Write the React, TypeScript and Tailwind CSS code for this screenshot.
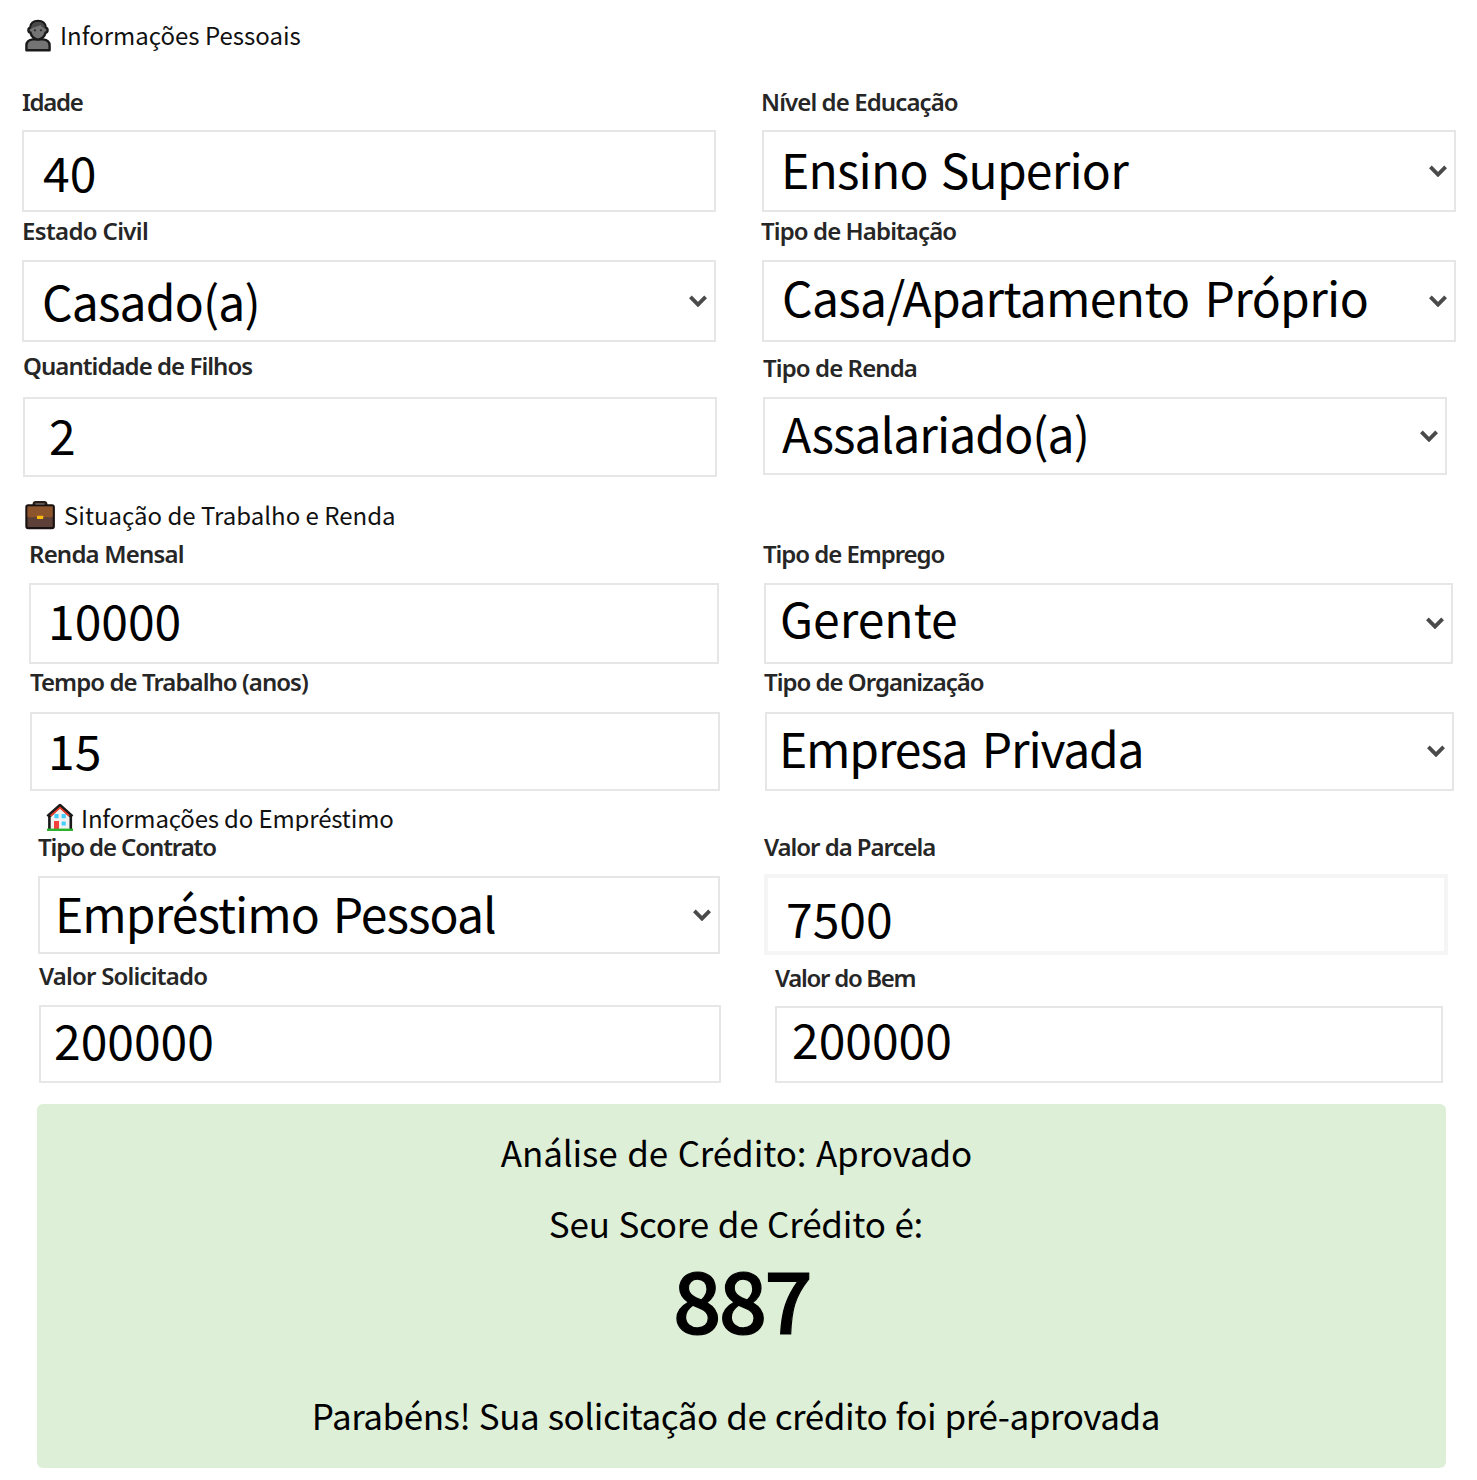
import React from 'react';
import clsx from 'clsx';

type FieldProps = {
  label: string;
  value: string;
  /** offset and tracking of the label */
  labelClass: string;
  /** margins, size and padding of the control */
  boxClass: string;
  /** offset and tracking of the value */
  valueClass?: string;
  borderClass?: string;
  select?: boolean;
};

function Chevron() {
  return (
    <svg className="mb-px h-3 w-[18px] shrink-0" viewBox="0 0 18 12" fill="none" aria-hidden="true">
      <path d="M1.4 1.8 L9 9.6 L16.6 1.8" stroke="#4a4a4a" strokeWidth="3.8" />
    </svg>
  );
}

function Field({ label, value, labelClass, boxClass, valueClass, borderClass = 'border-2 border-[#e6e6e6]', select }: FieldProps) {
  return (
    <div className="flex flex-col items-start">
      <span className={clsx("font-['Noto_Sans'] text-2xl leading-7 font-semibold whitespace-nowrap text-[#262626]", labelClass)}>{label}</span>
      <div className={clsx('flex items-start justify-between bg-white pr-[7px]', borderClass, boxClass)}>
        <span className={clsx('text-5xl leading-[48px] whitespace-nowrap text-black', valueClass)}>{value}</span>
        {select && (
          <span className="flex h-full items-center">
            <Chevron />
          </span>
        )}
      </div>
    </div>
  );
}

function Row({ className, children }: { className: string; children: React.ReactNode }) {
  return <div className={clsx('grid grid-cols-[740px_737px] items-start', className)}>{children}</div>;
}

function PersonIcon() {
  return (
    <svg className="mt-[-2px] h-[34px] w-7 shrink-0" viewBox="0 0 28 34" aria-hidden="true">
      <path d="M2.4 32.3 V27.5 C2.4 23.6 4.8 21.8 9 21.4 H19 C23.2 21.8 25.6 23.6 25.6 27.5 V32.3 Z" fill="#747474" stroke="#1a1a1a" strokeWidth="2.4" strokeLinejoin="round" />
      <path d="M14 3 C9.2 3 6.6 6 6.2 9.6 C3.8 10 3.8 14.2 6.4 14.6 C7.3 18.2 10.3 21.6 14 21.6 C17.7 21.6 20.7 18.2 21.6 14.6 C24.2 14.2 24.2 10 21.8 9.6 C21.4 6 18.8 3 14 3 Z" fill="#747474" stroke="#1a1a1a" strokeWidth="2.4" />
      <path d="M7.2 10.5 C7.2 6 10 4 14 4 C18.2 4 20.8 6 20.8 10.5 C18.8 9.5 17.3 8.4 16.5 7 C14 9 10.5 8.6 7.2 10.5 Z" fill="#484848" />
      <circle cx="11" cy="12.3" r="1.1" fill="#2c2c2c" />
      <circle cx="17" cy="12.3" r="1.1" fill="#2c2c2c" />
    </svg>
  );
}

function BriefcaseIcon() {
  return (
    <svg className="h-[30px] w-[31px] shrink-0" viewBox="0 0 31 30" aria-hidden="true">
      <path d="M10 6 V3.8 C10 2.8 10.7 2.3 11.7 2.3 H20.3 C21.3 2.3 22 2.8 22 3.8 V6" fill="none" stroke="#2a1d1a" strokeWidth="2.8" />
      <rect x="2.4" y="5.3" width="27.4" height="22.8" rx="1.8" fill="#5d4037" stroke="#1a1210" strokeWidth="2.2" />
      <path d="M3.5 6.4 H28.7 V16 C28.7 16.8 28 17.2 27 17.2 H5.2 C4.2 17.2 3.5 16.8 3.5 16 Z" fill="#8d552b" />
      <rect x="13" y="15.7" width="6.2" height="3.2" rx="0.5" fill="#fdbb0e" />
    </svg>
  );
}

function HouseIcon() {
  return (
    <svg className="h-7 w-[29px] shrink-0" viewBox="0 0 29 28" aria-hidden="true">
      <path d="M4.4 28 V13.5 L14.8 3.5 L25.8 13.5 V28" fill="#f1f1f1" stroke="#1a1a1a" strokeWidth="2.6" />
      <path d="M2.6 13.6 L15 2.6 L27.2 13.6" fill="none" stroke="#1a1a1a" strokeWidth="3.4" strokeLinejoin="round" />
      <path d="M5.6 12.9 L15 4.6 L24.2 12.9" fill="none" stroke="#ef3f2a" strokeWidth="1.7" />
      <rect x="9.4" y="11" width="4.2" height="4.2" rx="0.6" fill="#45cdfb" />
      <rect x="16.6" y="11" width="4.2" height="4.2" rx="0.6" fill="#45cdfb" />
      <rect x="16.6" y="18.4" width="4.2" height="4.2" rx="0.6" fill="#45cdfb" />
      <rect x="9" y="18" width="5" height="8" fill="#f0413a" />
      <path d="M2 25.6 H28 V28 H2 Z" fill="#2bb32b" />
    </svg>
  );
}

export default function App() {
  return (
    <main className="h-[1480px] w-[1477px] overflow-hidden bg-white pt-5 font-['Noto_Sans_CJK_JP',sans-serif]">
      <h2 className="flex h-7 items-start pl-6 text-2xl leading-7 text-[#111]">
        <PersonIcon />
        <span className="mt-px ml-2">Informações Pessoais</span>
      </h2>

      <Row className="mt-10 h-[129px]">
        <Field label="Idade" value="40" labelClass="ml-[22px] tracking-[-1.3px]" boxClass="ml-[22px] mt-[14px] h-[82px] w-[694px] pl-[19px] pt-[15px]" />
        <Field select label="Nível de Educação" value="Ensino Superior" labelClass="ml-[21px] tracking-[-0.9px]" boxClass="ml-[22px] mt-[14px] h-[82px] w-[694px] pl-[17px]" valueClass="mt-[12px] tracking-[-0.8px] [word-spacing:3px]" />
      </Row>
      <Row className="h-[135px]">
        <Field select label="Estado Civil" value="Casado(a)" labelClass="ml-[22px] tracking-[-0.65px]" boxClass="ml-[22px] mt-[15px] h-[82px] w-[694px] pl-[18px]" valueClass="mt-[14px] tracking-[-0.85px]" />
        <Field select label="Tipo de Habitação" value="Casa/Apartamento Próprio" labelClass="ml-[21px] tracking-[-0.9px]" boxClass="ml-[22px] mt-[15px] h-[82px] w-[694px] pl-[18px]" valueClass="mt-[10px] tracking-[-0.68px] [word-spacing:5px]" />
      </Row>
      <Row className="h-[148px]">
        <Field label="Quantidade de Filhos" value="2" labelClass="ml-[23px] tracking-[-0.95px]" boxClass="ml-[23px] mt-[17px] h-[80px] w-[694px] pl-[24px] pt-[11px]" />
        <Field select label="Tipo de Renda" value="Assalariado(a)" labelClass="mt-[2px] ml-[23px] tracking-[-0.9px]" boxClass="ml-[23px] mt-[15px] h-[78px] w-[684px] pl-[17px]" valueClass="mt-[9px] tracking-[-0.95px]" />
      </Row>

      <h2 className="flex h-7 items-start pl-6 text-2xl leading-7 text-[#111]">
        <BriefcaseIcon />
        <span className="mt-px ml-[9px]">Situação de Trabalho e Renda</span>
      </h2>

      <Row className="mt-3 h-32">
        <Field label="Renda Mensal" value="10000" labelClass="ml-[29px] tracking-[-0.8px]" boxClass="ml-[29px] mt-[15px] h-[81px] w-[690px] pl-[17px] pt-[10px]" />
        <Field select label="Tipo de Emprego" value="Gerente" labelClass="ml-[23px] tracking-[-1.05px]" boxClass="ml-[24px] mt-[15px] h-[81px] w-[689px] pl-[14px]" valueClass="mt-[8px]" />
      </Row>
      <Row className="h-[135px]">
        <Field label="Tempo de Trabalho (anos)" value="15" labelClass="ml-[30px] tracking-[-0.95px]" boxClass="ml-[30px] mt-[16px] h-[79px] w-[690px] pl-[16px] pt-[11px]" />
        <Field select label="Tipo de Organização" value="Empresa Privada" labelClass="ml-[24px] tracking-[-1px]" boxClass="ml-[25px] mt-[16px] h-[79px] w-[689px] pl-[12px]" valueClass="mt-[9px] tracking-[-1.2px] [word-spacing:5px]" />
      </Row>

      <h2 className="flex h-7 items-start overflow-hidden pl-[45px] text-2xl leading-7 text-[#111]">
        <HouseIcon />
        <span className="mt-px ml-[7px] tracking-[-0.15px]">Informações do Empréstimo</span>
      </h2>

      <Row className="mt-0.5 h-[129px]">
        <Field select label="Tipo de Contrato" value="Empréstimo Pessoal" labelClass="ml-[38px] tracking-[-1.1px]" boxClass="ml-[38px] mt-[15px] h-[78px] w-[682px] pl-[15px]" valueClass="mt-[10px] tracking-[-0.95px] [word-spacing:4px]" />
        <Field label="Valor da Parcela" value="7500" labelClass="ml-[24px] tracking-[-1.05px]" borderClass="border-4 border-[#f5f5f5]" boxClass="ml-[24px] mt-[13px] h-[81px] w-[684px] pl-[18px] pt-[15px]" />
      </Row>
      <Row className="h-[142px]">
        <Field label="Valor Solicitado" value="200000" labelClass="ml-[39px] tracking-[-0.8px]" boxClass="ml-[39px] mt-[15px] h-[78px] w-[682px] pl-[13px] pt-[8px]" />
        <Field label="Valor do Bem" value="200000" labelClass="mt-[2px] ml-[35px] tracking-[-1.3px]" boxClass="ml-[35px] mt-[14px] h-[77px] w-[668px] pl-[15px] pt-[6px]" />
      </Row>

      <section className="ml-[37px] flex h-[364px] w-[1409px] flex-col items-center rounded-md bg-[#deefd8] pt-7 text-[35px] leading-10 text-black">
        <p className="pr-[10px] tracking-[-0.15px] [word-spacing:2px]">Análise de Crédito: Aprovado</p>
        <p className="mt-[31px] pr-[11px] tracking-[-0.2px] [word-spacing:1px]">Seu Score de Crédito é:</p>
        <strong className="mt-[9px] text-[85px] leading-[90px] font-medium tracking-[-2.8px] [-webkit-text-stroke:1.2px_black]">887</strong>
        <p className="mt-[53px] pr-[11px] tracking-[-0.45px] [word-spacing:1px]">Parabéns! Sua solicitação de crédito foi pré-aprovada</p>
      </section>
    </main>
  );
}
